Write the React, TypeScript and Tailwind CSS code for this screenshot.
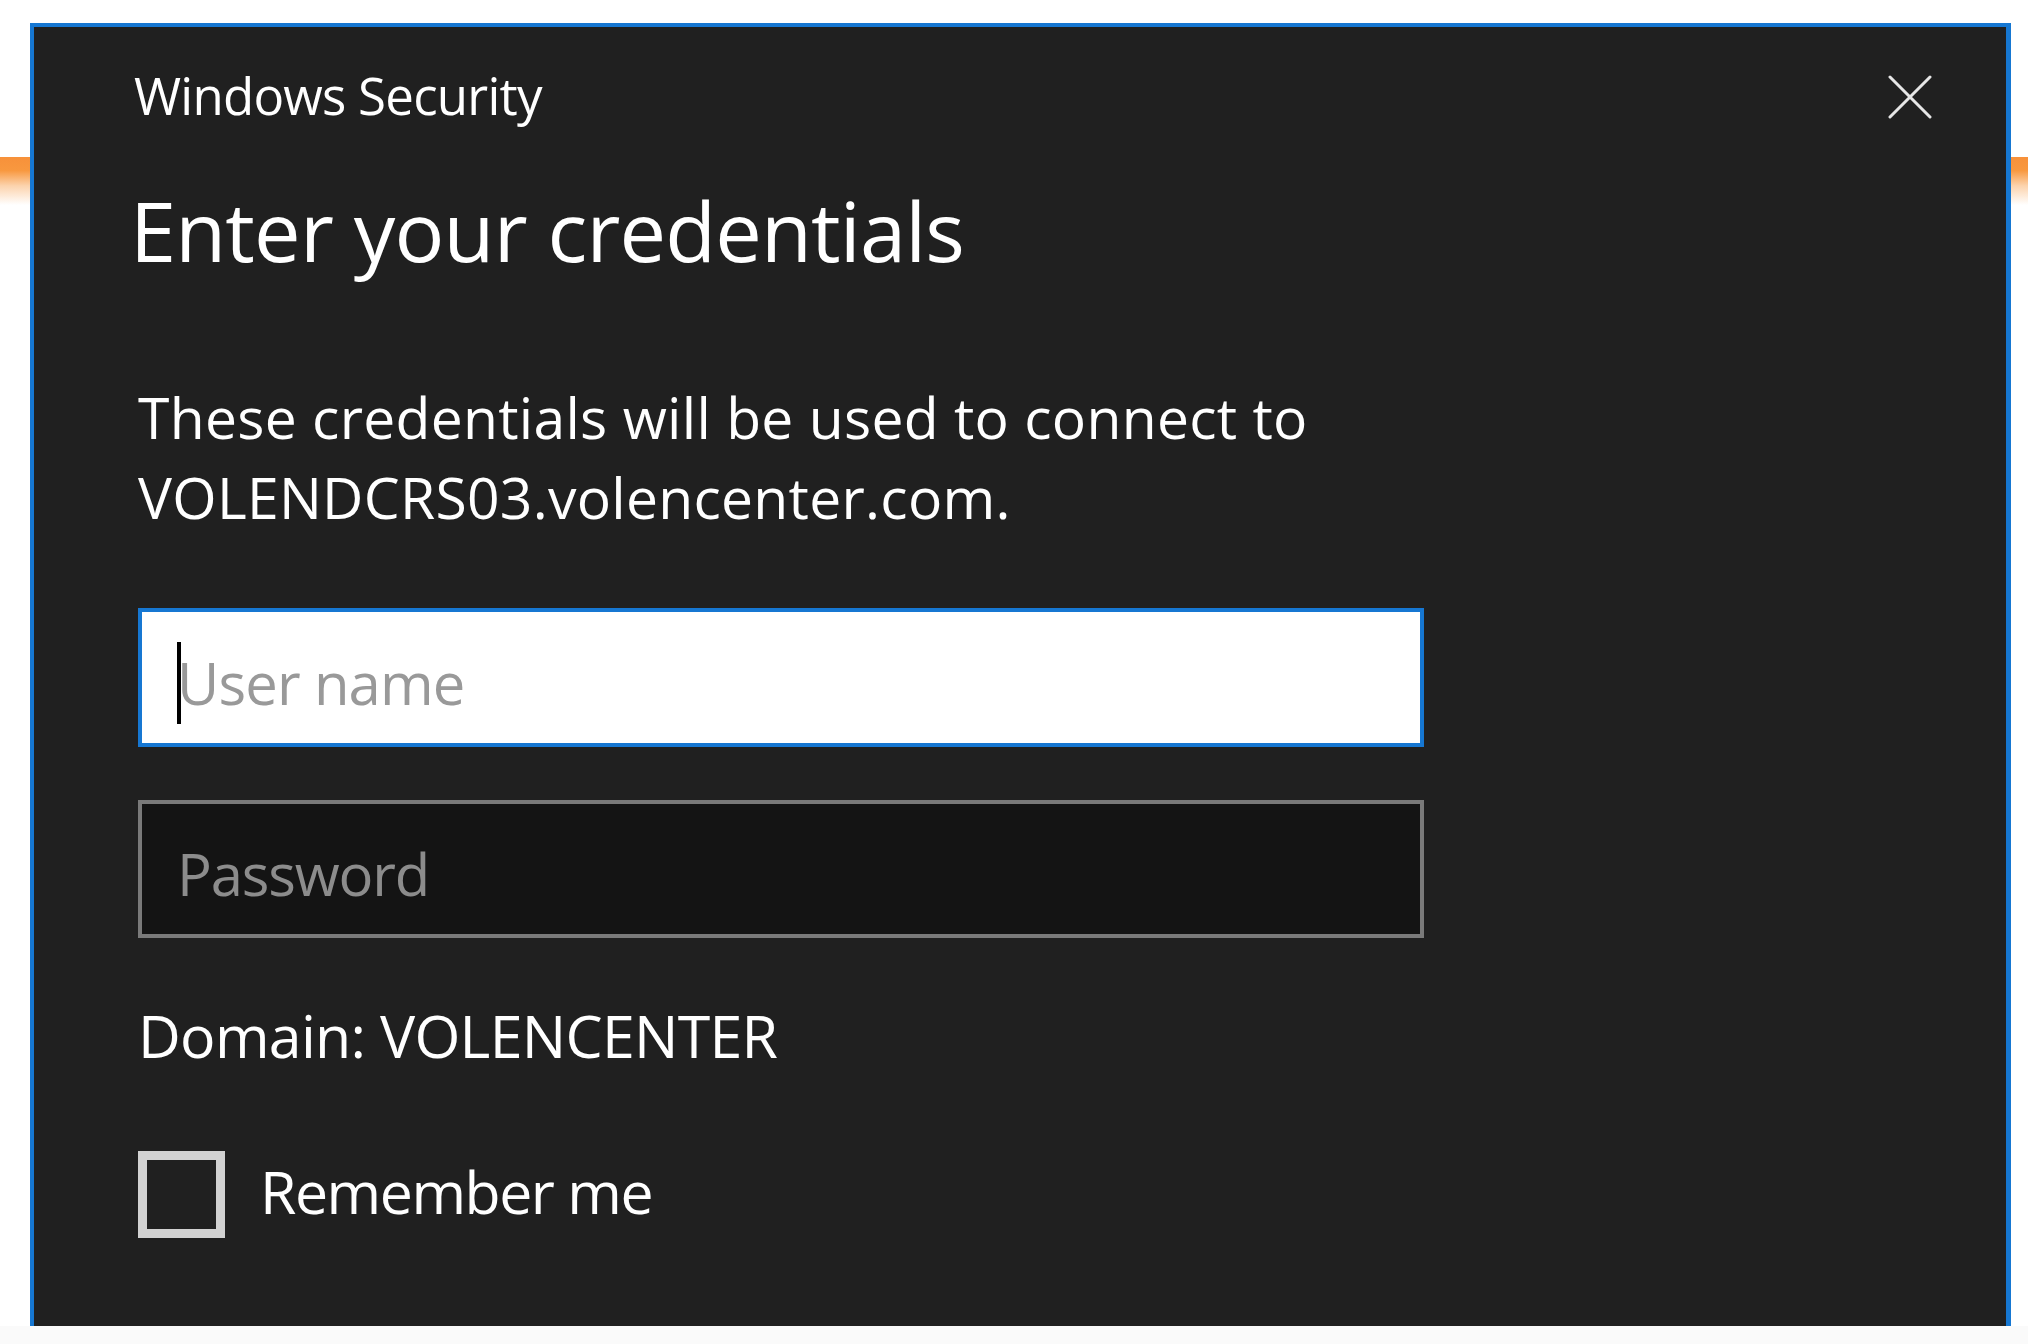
import type { ReactNode } from "react";

const fontStack = {
  fontFamily: '"Open Sans", "Noto Sans", "Liberation Sans", sans-serif',
};

export default function App() {
  return (
    <div
      className="flex h-[1344px] w-[2028px] flex-col overflow-hidden bg-white"
      style={fontStack}
    >
      <div className="flex h-[1326px] pt-[23px]">
        <SideStrip className="w-[30px]" />
        <CredentialDialog />
        <SideStrip className="flex-1" />
      </div>
      <div className="h-[18px] bg-[#fafafa]" />
    </div>
  );
}

function SideStrip({ className }: { className: string }) {
  return (
    <div className={`${className} shrink-0`}>
      <div className="mt-[134px] h-[48px] bg-[linear-gradient(to_bottom,#f7913a_0%,#f8983f_28%,#fcd3ad_60%,#ffffff_100%)]" />
    </div>
  );
}

function CredentialDialog() {
  return (
    <div className="flex h-full w-[1981px] shrink-0 flex-col border-t-4 border-r-[5px] border-l-4 border-[#1677d2] bg-[#202020] pl-[104px] text-white">
      <div className="flex items-start justify-between pr-[74px]">
        <h1 className="-ml-[4px] mt-[38px] text-[51px] leading-[60px] font-normal tracking-[-0.015em]">
          Windows Security
        </h1>
        <button className="mt-[48px] flex size-[44px] items-center justify-center" type="button">
          <svg className="size-[44px]" fill="none" viewBox="0 0 44 44">
            <path
              d="M2 2 L42 42 M42 2 L2 42"
              stroke="#e6e6e6"
              strokeLinecap="round"
              strokeWidth="3"
            />
          </svg>
        </button>
      </div>

      <h2 className="-ml-[8px] mt-[55px] text-[83px] leading-[100px] font-normal tracking-[-0.01em]">
        Enter your credentials
      </h2>

      <p className="mt-[97px] text-[57px] leading-[80px] tracking-[0.005em]">
        These credentials will be used to connect to
        <br />
        VOLENDCRS03.volencenter.com.
      </p>

      <Field className="mt-[71px] h-[139px] border-[#1677d2] bg-white pl-[35px] pt-[10px]">
        <span className="h-[82px] w-[4px] shrink-0 bg-black" />
        <span className="-ml-[4px] text-[58px] leading-[82px] tracking-[-0.015em] text-[#999999]">
          User name
        </span>
      </Field>

      <Field className="mt-[53px] h-[138px] border-[#7a7a7a] bg-[#141414] pl-[35px] pt-[9px]">
        <span className="text-[58px] leading-[82px] tracking-[-0.02em] text-[#8c8c8c]">
          Password
        </span>
      </Field>

      <p className="mt-[57px] text-[59px] leading-[80px] tracking-[-0.012em]">
        Domain: VOLENCENTER
      </p>

      <label className="mt-[76px] flex items-start">
        <span className="size-[87px] shrink-0 border-[9px] border-[#d2d2d2] bg-[#202020]" />
        <span className="ml-[35px] text-[59px] leading-[80px] tracking-[-0.025em]">
          Remember me
        </span>
      </label>
    </div>
  );
}

function Field({ children, className }: { children: ReactNode; className: string }) {
  return (
    <div className={`flex w-[1286px] items-center border-4 ${className}`}>
      {children}
    </div>
  );
}
